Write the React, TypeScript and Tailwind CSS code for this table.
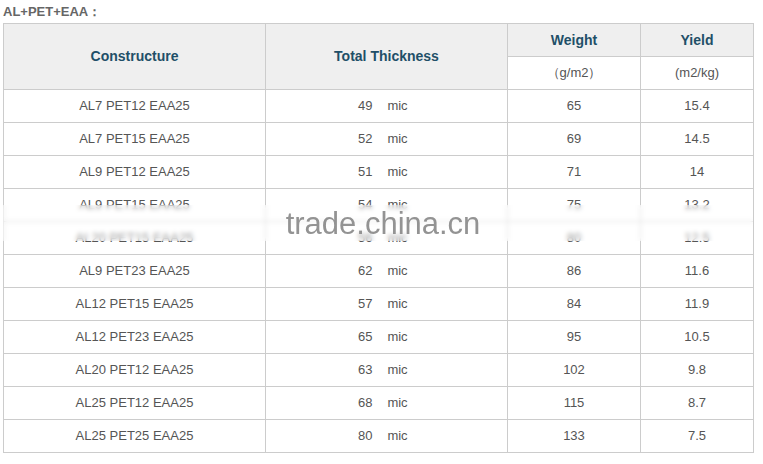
const rows = [
  ["AL7 PET12 EAA25", "49", "65", "15.4"],
  ["AL7 PET15 EAA25", "52", "69", "14.5"],
  ["AL9 PET12 EAA25", "51", "71", "14"],
  ["AL9 PET15 EAA25", "54", "75", "13.2"],
  ["AL20 PET15 EAA25", "56", "80", "12.5"],
  ["AL9 PET23 EAA25", "62", "86", "11.6"],
  ["AL12 PET15 EAA25", "57", "84", "11.9"],
  ["AL12 PET23 EAA25", "65", "95", "10.5"],
  ["AL20 PET12 EAA25", "63", "102", "9.8"],
  ["AL25 PET12 EAA25", "68", "115", "8.7"],
  ["AL25 PET25 EAA25", "80", "133", "7.5"],
];

const th = "border border-[#cccccc] bg-[#efefef] text-[#1f4f68] font-bold text-[14px]";
const td = "border border-[#cccccc] h-[33px] text-center text-[#555555] text-[13px] p-0";

export default function App() {
  return (
    <div className="w-[763px] h-[464px] bg-white font-['Liberation_Sans',Arial,sans-serif]">
      <div className="h-[23px] pl-[3px] pt-[3px] text-[13px] font-bold text-[#666666] leading-[17px]">
        AL+PET+EAA：
      </div>
      <div className="relative ml-[3px] w-[750px]">
        <table className="w-full border-collapse table-fixed">
          <colgroup>
            <col className="w-[262px]" />
            <col className="w-[242px]" />
            <col className="w-[133px]" />
            <col className="w-[113px]" />
          </colgroup>
          <thead>
            <tr className="h-[33px]">
              <th rowSpan={2} className={th}>Constructure</th>
              <th rowSpan={2} className={th}>Total Thickness</th>
              <th className={th}>Weight</th>
              <th className={th}>Yield</th>
            </tr>
            <tr className="h-[33px]">
              <td className={td}>（g/m2）</td>
              <td className={td}>(m2/kg)</td>
            </tr>
          </thead>
          <tbody>
            {rows.map((r) => (
              <tr key={r[0]}>
                <td className={td}>{r[0]}</td>
                <td className={td}>
                  <span className="inline-block w-[40px] text-right pr-[15px] -ml-[18px]">{r[1]}</span>
                  <span>mic</span>
                </td>
                <td className={td}>{r[2]}</td>
                <td className={td}>{r[3]}</td>
              </tr>
            ))}
          </tbody>
        </table>
        <div className="absolute left-0 right-0 top-[182px] h-[36px] flex items-center justify-center backdrop-blur-[2px] bg-white/40">
          <span className="text-[31px] text-[#939393] pl-[10px] leading-none">trade.china.cn</span>
        </div>
      </div>
    </div>
  );
}
